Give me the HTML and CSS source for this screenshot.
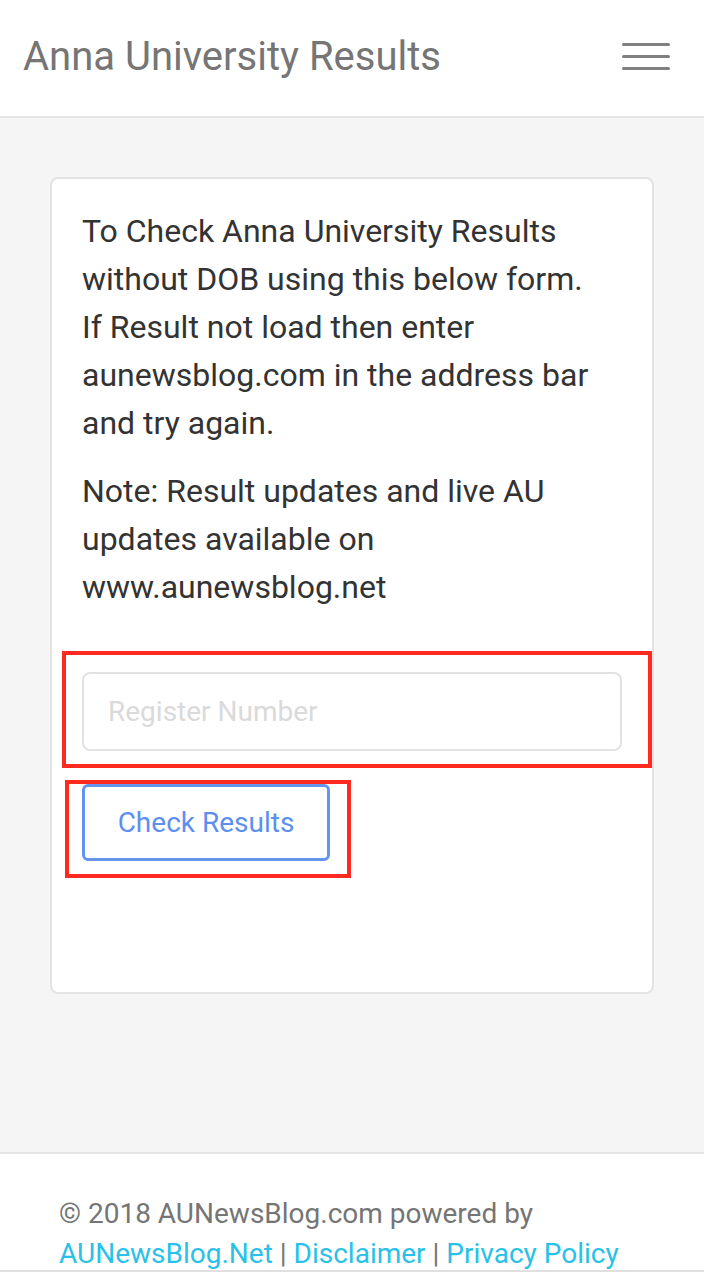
FILE: index.html
```html
<!DOCTYPE html>
<html lang="en">
<head>
    <meta charset="UTF-8">
    <meta name="viewport" content="width=device-width, initial-scale=1.0">
    <title>Anna University Results</title>
    <link rel="stylesheet" href="styles.css">
</head>
<body>
    <header class="topbar">
        <div class="brand">Anna University Results</div>
        <button class="menu-toggle" aria-label="Menu">
            <span></span><span></span><span></span>
        </button>
    </header>

    <main class="page">
        <div class="card">
            <p>To Check Anna University Results without DOB using this below form. If Result not load then enter aunewsblog.com in the address bar and try again.</p>
            <p>Note: Result updates and live AU updates available on www.aunewsblog.net</p>

            <form class="result-form">
                <input type="text" class="reg-input" placeholder="Register Number">
                <button type="button" class="check-btn">Check Results</button>
            </form>

            <!-- highlight marks -->
            <div class="mark mark-input"></div>
            <div class="mark mark-button"></div>
        </div>
    </main>

    <footer class="footer">
        <p>&copy; 2018 AUNewsBlog.com powered by<br>
        <a href="#">AUNewsBlog.Net</a> | <a href="#">Disclaimer</a> | <a href="#">Privacy Policy</a></p>
    </footer>
</body>
</html>
```

FILE: styles.css
```css
body {
    font-family: Roboto, 'Liberation Sans', Arial, sans-serif;
    margin: 0;
    padding: 0;
    background: #fff;
    color: #333;
}
.topbar {
    height: 116px;
    display: flex;
    align-items: center;
    justify-content: space-between;
    padding: 0 23px;
    border-bottom: 2px solid #e6e6e6;
    background: #fff;
}
.brand {
    font-size: 40px;
    color: #757575;
    margin-top: -4px;
}
.menu-toggle {
    width: 48px;
    height: 40px;
    padding: 0;
    margin-right: 11px;
    border: none;
    background: none;
    display: flex;
    flex-direction: column;
    justify-content: center;
    gap: 9px;
    margin-top: -3px;
}
.menu-toggle span {
    display: block;
    height: 3px;
    background: #808080;
    border-radius: 2px;
}
.page {
    background: #f5f5f5;
    padding: 59px 50px 158px;
}
.card {
    position: relative;
    background: #fff;
    border: 2px solid #e3e3e3;
    border-radius: 8px;
    padding: 28px 44px 131px 30px;
    box-sizing: border-box;
    height: 817px;
}
.card p {
    margin: 0 0 20px;
    font-size: 32px;
    line-height: 48px;
    color: #333;
}
.result-form {
    margin-top: 61px;
}
.reg-input {
    display: block;
    width: 540px;
    height: 79px;
    box-sizing: border-box;
    border: 2px solid #e2e2e2;
    border-radius: 8px;
    padding: 0 24px;
    font-size: 28px;
    font-family: Roboto, sans-serif;
    color: #333;
    margin-bottom: 33px;
}
.reg-input::placeholder {
    color: #dadada;
}
.check-btn {
    width: 248px;
    height: 77px;
    border: 3px solid #6495ed;
    border-radius: 6px;
    background: #fff;
    color: #5b8ff0;
    font-size: 28px;
    font-family: Roboto, sans-serif;
    padding: 0;
}
.mark {
    position: absolute;
    border: 4px solid #ff2a1f;
    box-sizing: border-box;
}
.mark-input {
    left: 10px;
    top: 472px;
    width: 590px;
    height: 117px;
}
.mark-button {
    left: 13px;
    top: 601px;
    width: 286px;
    height: 98px;
}
.footer {
    border-top: 2px solid #e6e6e6;
    border-bottom: 2px solid #e0e0e0;
    padding: 40px 59px 0;
    height: 120px;
    box-sizing: border-box;
    background: #fff;
}
.footer p {
    margin: 0;
    font-size: 28px;
    line-height: 40px;
    color: #757575;
}
.footer a {
    color: #29c1e8;
    text-decoration: none;
}
```
